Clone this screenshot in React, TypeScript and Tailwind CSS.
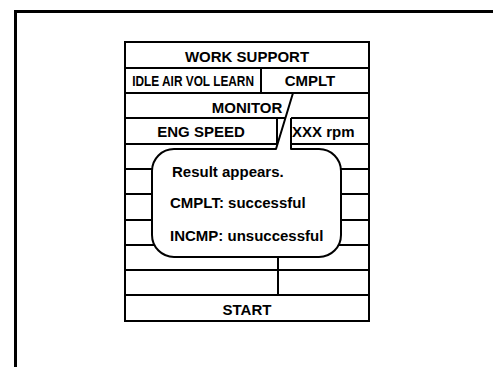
import React from "react";

const font = { fontFamily: '"Liberation Sans", Arial, sans-serif' };

export default function App() {
  return (
    <div
      className="relative w-[493px] h-[367px] bg-white overflow-hidden pt-[10px] pl-[14px]"
      style={font}
    >
      <div className="h-[357px] border-t-[3px] border-l-[3px] border-black">
        {/* table */}
        <div className="ml-[107px] mt-[28px] w-[246px] border-2 border-black flex flex-col text-[15px] font-bold text-black leading-none">
          <div className="h-[26px] border-b-2 border-black flex items-center justify-center pt-[3px]">
            WORK SUPPORT
          </div>
          <div className="h-[25px] border-b-2 border-black flex">
            <div className="w-[134px] flex items-center justify-center">
              <span className="inline-block scale-x-[0.79] whitespace-nowrap">IDLE AIR VOL LEARN</span>
            </div>
            <div className="flex-1 border-l-2 border-black flex items-center justify-center pr-[10px]">
              CMPLT
            </div>
          </div>
          <div className="h-[25px] border-b-2 border-black flex items-center justify-center pt-[3px]">
            MONITOR
          </div>
          <div className="h-[26px] border-b-2 border-black flex">
            <div className="w-[150px] flex items-center justify-center">ENG SPEED</div>
            <div className="flex-1 border-l-2 border-black flex items-center pl-[14px]">XXX rpm</div>
          </div>
          <div className="h-[25px] border-b-2 border-black flex">
            <div className="w-[151px]" />
            <div className="flex-1 border-l-2 border-black" />
          </div>
          <div className="h-[25px] border-b-2 border-black flex">
            <div className="w-[151px]" />
            <div className="flex-1 border-l-2 border-black" />
          </div>
          <div className="h-[26px] border-b-2 border-black flex">
            <div className="w-[151px]" />
            <div className="flex-1 border-l-2 border-black" />
          </div>
          <div className="h-[25px] border-b-2 border-black flex">
            <div className="w-[151px]" />
            <div className="flex-1 border-l-2 border-black" />
          </div>
          <div className="h-[25px] border-b-2 border-black flex">
            <div className="w-[151px]" />
            <div className="flex-1 border-l-2 border-black" />
          </div>
          <div className="h-[25px] border-b-2 border-black flex">
            <div className="w-[151px]" />
            <div className="flex-1 border-l-2 border-black" />
          </div>
          <div className="h-[24px] flex items-center justify-center pt-[2px]">START</div>
        </div>
      </div>

      {/* callout bubble */}
      <svg
        className="absolute left-0 top-0 pointer-events-none"
        width="493"
        height="367"
        viewBox="0 0 493 367"
      >
        <path
          d="M291 149 L291 118 L293 93 L276 149 L174 149 A22 22 0 0 0 152 171 L152 235 A22 22 0 0 0 174 257 L319 257 A22 22 0 0 0 341 235 L341 171 A22 22 0 0 0 319 149 Z"
          fill="white"
          stroke="none"
        />
        <path
          d="M291 118 L291 149 L319 149 A22 22 0 0 1 341 171 L341 235 A22 22 0 0 1 319 257 L174 257 A22 22 0 0 1 152 235 L152 171 A22 22 0 0 1 174 149 L276 149 L293 93"
          fill="none"
          stroke="black"
          strokeWidth="2"
          strokeLinejoin="round"
        />
      </svg>
      <div className="absolute left-[170px] top-[164px] text-[15px] font-bold leading-none text-black whitespace-nowrap">
        <div className="pl-[2px]">Result appears.</div>
        <div className="mt-[16px]">CMPLT: successful</div>
        <div className="mt-[18px]">INCMP: unsuccessful</div>
      </div>
    </div>
  );
}
